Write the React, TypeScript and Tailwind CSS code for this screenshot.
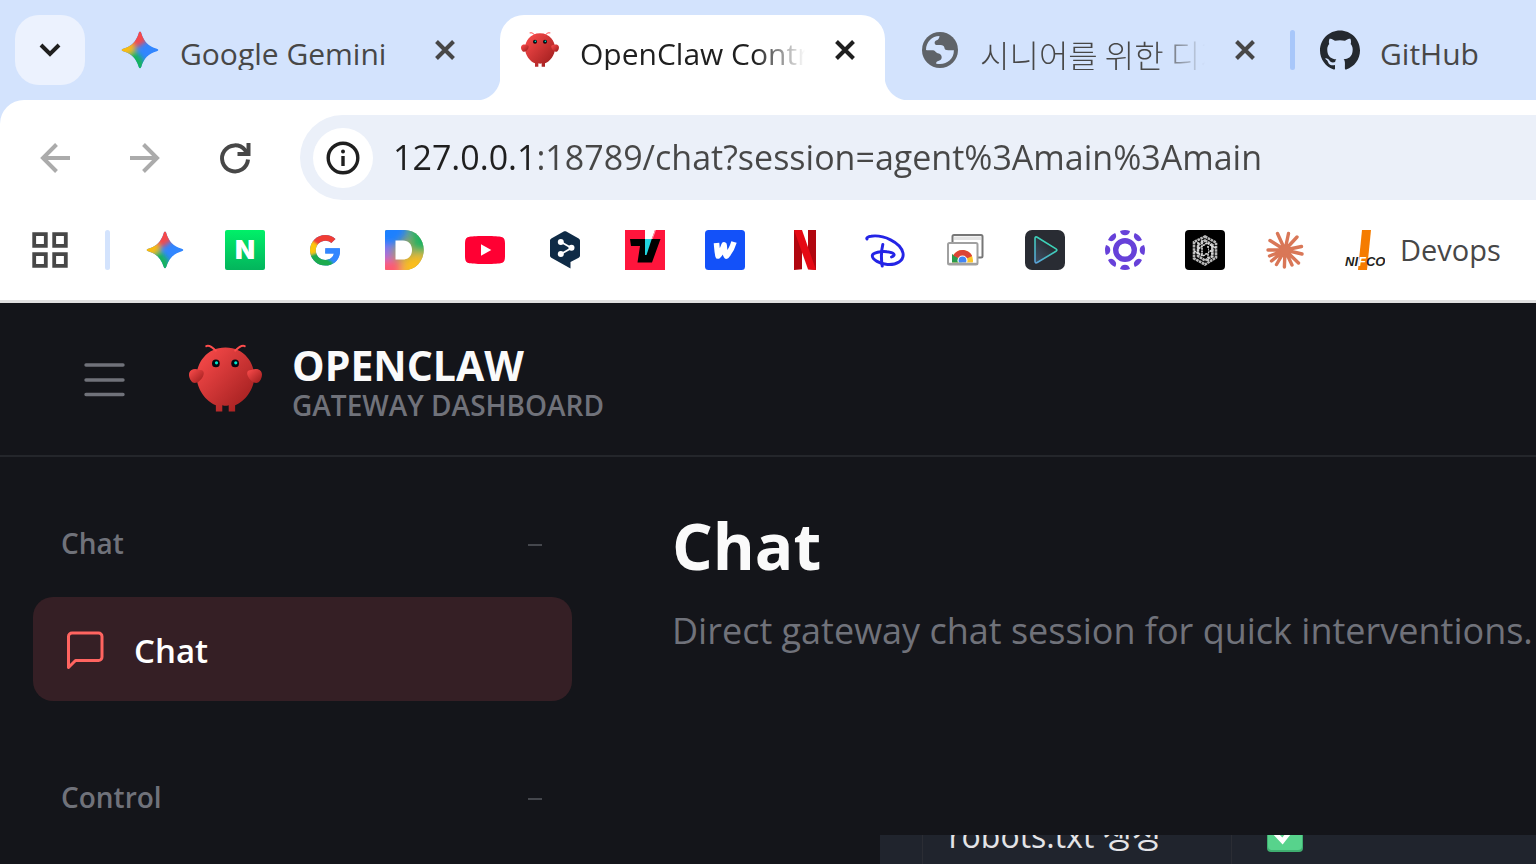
import type { ReactNode } from 'react';
import { SiGithub } from 'react-icons/si';

function Gemini({ id }: { id: string }) {
  return (
    <svg viewBox="0 0 40 40" className="size-10 shrink-0" aria-hidden="true">
      <defs>
        <clipPath id={`${id}-c`}>
          <path d="M20 1.8c.7 0 1 .5 1.3 1.4C23.800 11.500 28.500 16.200 36.800 18.700c.9.3 1.400.6 1.400 1.300s-.5 1-1.400 1.300C28.500 23.800 23.800 28.500 21.300 36.800c-.3.9-.6 1.400-1.300 1.400s-1-.5-1.300-1.400C16.200 28.500 11.500 23.800 3.200 21.300 2.300 21 1.800 20.700 1.800 20s.5-1 1.400-1.300C11.500 16.200 16.200 11.500 18.700 3.200 19 2.300 19.300 1.800 20 1.800z" />
        </clipPath>
        <filter id={`${id}-b`} x="-50%" y="-50%" width="200%" height="200%">
          <feGaussianBlur stdDeviation="2.6" />
        </filter>
      </defs>
      <g clipPath={`url(#${id}-c)`}>
        <rect width="40" height="40" fill="#3186ff" />
        <g filter={`url(#${id}-b)`}>
          <path d="M8 -4h22v12l-12 9-10-3z" fill="#f5484b" />
          <path d="M-4 10l13-1 7 10-7 7-13 2z" fill="#fbbc0b" />
          <path d="M8 24l7-4 9 11 2 14H8z" fill="#15b45c" />
        </g>
      </g>
    </svg>
  );
}

function Claw({ id, className }: { id: string; className: string }) {
  return (
    <svg viewBox="0 0 120 120" className={className} aria-hidden="true">
      <defs>
        <linearGradient id={id} x1="0%" y1="0%" x2="100%" y2="100%">
          <stop offset="0%" stopColor="#ff4d4d" />
          <stop offset="100%" stopColor="#991b1b" />
        </linearGradient>
      </defs>
      <g fill={`url(#${id})`}>
        <path d="M60 10C30 10 15 35 15 55c0 20 15 40 30 45v10h10v-10s5 2 10 0v10h10v-10c15-5 30-25 30-45 0-20-15-45-45-45z" />
      </g>
      <path d="M20 45C5 40 0 50 5 60s15 5 20-5c3-7 0-10-5-10z" fill={`url(#${id})`} />
      <path d="M100 45c15-5 20 5 15 15s-15 5-20-5c-3-7 0-10 5-10z" fill={`url(#${id})`} />
      <path d="M45 15Q35 5 30 8M75 15Q85 5 90 8" fill="none" stroke="#ff4d4d" strokeWidth="3" strokeLinecap="round" />
      <circle cx="45" cy="35" r="6" fill="#050810" />
      <circle cx="75" cy="35" r="6" fill="#050810" />
      <circle cx="46" cy="34" r="2.5" fill="#00e5cc" />
      <circle cx="76" cy="34" r="2.5" fill="#00e5cc" />
    </svg>
  );
}

function Globe() {
  return (
    <svg viewBox="0 0 40 40" className="size-10 shrink-0" aria-hidden="true">
      <circle cx="20" cy="20" r="18" fill="#5f6368" />
      <path
        d="M6 20C6 12 12 6 19.500 6c-.4 2.600-1 3.600-2.800 4.200-1.700.6-2.200 1.600-2 3 .2 1.200.8 1.800 2.300 1.800 2.500 0 5-.5 6.500 1 1.500 1.500.5 3.500 3 4 2.500.5 4.500.3 7.400.2C34 28.500 27.500 34 20 34c-1.500 0-3-.2-4-.6.2-2.200 2.400-2.400 4.400-3.400 1.600-.8 1.600-3.400.6-5-1.200-1.800-3-1.200-4.600-2.400C15 21.500 14.800 20.400 13 20.200 10.500 20 8 20.400 6 20z"
        fill="#d3e3fd"
      />
    </svg>
  );
}

function CloseIcon() {
  return (
    <svg viewBox="0 0 40 40" className="size-10" fill="none" stroke="currentColor" strokeWidth="4" aria-hidden="true">
      <path d="M11.500 11.500l17 17M28.500 11.500l-17 17" />
    </svg>
  );
}

type TabProps = { title: string; icon: ReactNode; active?: boolean; textClass: string };

function Tab({ title, icon, active = false, textClass }: TabProps) {
  const base = 'relative flex w-[385px] shrink-0 items-center gap-5 px-5 pb-[15px]';
  const look = active
    ? ' rounded-t-3xl bg-white text-[#1f1f1f] before:absolute before:bottom-0 before:-left-6 before:size-6 before:bg-[radial-gradient(circle_at_0_0,transparent_24px,white_25px)] after:absolute after:-right-6 after:bottom-0 after:size-6 after:bg-[radial-gradient(circle_at_100%_0,transparent_24px,white_25px)]'
    : ' text-[#474747]';
  return (
    <div className={base + look} role="tab" aria-selected={active}>
      {icon}
      <span className={`h-10 min-w-0 flex-1 overflow-hidden leading-12 whitespace-nowrap ${textClass}`}>{title}</span>
      <button type="button" aria-label={`Close ${title}`}>
        <CloseIcon />
      </button>
    </div>
  );
}

const fade = 'mask-[linear-gradient(90deg,black_175px,transparent_225px)]';

const ico = 'size-10 shrink-0';

const bookmarks: { name: string; icon: ReactNode }[] = [
  { name: 'Gemini', icon: <Gemini id="gem-b" /> },
  {
    name: 'Naver',
    icon: (
      <span className="flex size-10 items-center justify-center rounded-xs bg-linear-to-b from-[#00f068] to-[#03b45c] font-[Inter] text-[26px] leading-none font-black text-white">
        N
      </span>
    ),
  },
  {
    name: 'Google',
    icon: (
      <svg viewBox="0 0 40 40" className={ico} aria-hidden="true">
        <defs>
          <clipPath id="goo-c">
            <path
              transform="translate(5 4.600) scale(.0615)"
              d="M488 261.800C488 403.300 391.100 504 248 504 110.800 504 0 393.200 0 256S110.800 8 248 8c66.800 0 123 24.500 166.300 64.900l-67.500 64.900C258.500 52.600 94.300 116.600 94.300 256c0 86.500 69.100 156.600 153.700 156.600 98.200 0 135-70.400 140.800-106.900H248v-85.300h236.100c2.300 12.700 3.900 24.900 3.900 41.400z"
            />
          </clipPath>
          <filter id="goo-b" x="-20%" y="-20%" width="140%" height="140%">
            <feGaussianBlur stdDeviation="1.300" />
          </filter>
        </defs>
        <g clipPath="url(#goo-c)">
          <rect width="40" height="40" fill="#4285f4" />
          <g filter="url(#goo-b)">
            <path d="M20 20L4 10V0h36v16H20z" fill="#f03e35" />
            <path d="M20 20L6 10H0v18h6z" fill="#fcc60a" />
            <path d="M20 20L2 26v14h26v-8z" fill="#1cab4e" />
            <path d="M19 17h22v14l-11 3-11-8z" fill="#3086ff" />
          </g>
        </g>
      </svg>
    ),
  },
  {
    name: 'Daum',
    icon: (
      <svg viewBox="0 0 40 40" className={ico} aria-hidden="true">
        <defs>
          <clipPath id="daum-c">
            <path d="M1.500 0H20a18.700 20 0 0 1 0 40H1.500A1.500 1.500 0 0 1 0 38.500v-37A1.500 1.500 0 0 1 1.500 0z" />
          </clipPath>
          <filter id="daum-b" x="-20%" y="-20%" width="140%" height="140%">
            <feGaussianBlur stdDeviation="4" />
          </filter>
        </defs>
        <g clipPath="url(#daum-c)">
          <rect width="40" height="40" fill="#a0a45e" />
          <g filter="url(#daum-b)">
            <path d="M-10 -10h32v16L8 18h-18z" fill="#1a80ff" />
            <path d="M24 -10h26v34H30z" fill="#1fb364" />
            <path d="M-10 17H8v14h-18z" fill="#a070e0" />
            <path d="M-10 30h26v20h-26z" fill="#ff5a70" />
            <path d="M18 28l22-6v28H16z" fill="#fbbd1a" />
          </g>
        </g>
        <path d="M10.500 10.500v19H18c5.500 0 9-4 9-9.500s-3.500-9.500-9-9.500z" fill="#fff" />
      </svg>
    ),
  },
  {
    name: 'YouTube',
    icon: (
      <svg viewBox="0 0 40 40" className={ico} aria-hidden="true">
        <path d="M4.500 6.800c6-1 25-1 31 0 3 .4 4.200 2.200 4.400 5 .3 5 .3 11.400 0 16.400-.2 2.800-1.400 4.600-4.400 5-6 1-25 1-31 0-3-.4-4.200-2.200-4.400-5-.3-5-.3-11.400 0-16.400.2-2.800 1.400-4.600 4.400-5z" fill="#ff0033" />
        <path d="M16 14.200v11.600L26.300 20z" fill="#fff" />
      </svg>
    ),
  },
  {
    name: 'DeepL',
    icon: (
      <svg viewBox="0 0 40 40" className={ico} aria-hidden="true">
        <path d="M18.700 1.500c.8-.5 1.800-.5 2.600 0l12.400 7c.8.5 1.300 1.300 1.300 2.300v14.600c0 1-.5 1.800-1.300 2.300L25.500 32v6.500L6.300 27.700c-.8-.5-1.300-1.300-1.300-2.300V10.800c0-1 .5-1.800 1.300-2.300z" fill="#0f2b46" />
        <path d="M16 12l10.500 6L16 24" fill="none" stroke="#fff" strokeWidth="1.800" />
        <circle cx="15.800" cy="12" r="3" fill="#fff" />
        <circle cx="26.500" cy="17.800" r="3" fill="#fff" />
        <circle cx="15.800" cy="24" r="3" fill="#fff" />
      </svg>
    ),
  },
  {
    name: 'TVING',
    icon: (
      <svg viewBox="0 0 40 40" className={ico} aria-hidden="true">
        <path d="M0 0h40v40H0z" fill="#ff153c" />
        <path d="M20 0h10l-4 11h-6z" fill="#fff" />
        <path d="M26 11l4-11h1l-4 11z" fill="#ff9aab" />
        <path d="M5 9h30.500L27 32.500H12.500L15 16H6z" fill="#000" />
        <path d="M20 9h6.700L21.500 25H20z" fill="#20d5df" />
      </svg>
    ),
  },
  {
    name: 'Wavve',
    icon: (
      <svg viewBox="0 0 40 40" className={ico} aria-hidden="true">
        <rect width="40" height="40" rx="3.500" fill="#1351f9" />
        <path d="M11.500 13c.5 5 .6 9 1.600 13 2.700-2.500 4.500-6.500 6-11 0 4 .8 8 2.300 11 3.700-4 6-8.500 7.600-14" fill="none" stroke="#fff" strokeWidth="5.600" strokeLinejoin="round" />
      </svg>
    ),
  },
  {
    name: 'Netflix',
    icon: (
      <svg viewBox="0 0 40 40" className={ico} aria-hidden="true">
        <path d="M9 0h8v39.200L9 40zM23 0h8v40l-8-.8z" fill="#b1060f" />
        <path d="M9 0h8l14 40-8-.8z" fill="#e50914" />
      </svg>
    ),
  },
  {
    name: 'Disney+',
    icon: (
      <svg viewBox="0 0 40 40" className={ico} aria-hidden="true" fill="none" stroke="#2424e6" strokeLinecap="round" strokeLinejoin="round">
        <path d="M2 9C1 8 3 6.500 6 6.200 18 4.500 35.500 12 38 23 39.500 31 31 35 22.500 34.500 14.500 34 7.500 29.500 7.300 26 7 22.500 17 21 22 21.700c7 .7 9.500 3.300 4.500 5.300" strokeWidth="2.900" />
        <path d="M17.800 14.500c-1.500 6-1.600 15-.6 21.500" strokeWidth="3" />
      </svg>
    ),
  },
  {
    name: 'Chrome Web Store',
    icon: (
      <svg viewBox="0 0 40 40" className={ico} aria-hidden="true">
        <defs>
          <clipPath id="cws-c">
            <path d="M5.500 13.500h24v19h-24z" />
          </clipPath>
        </defs>
        <rect x="7.500" y="5" width="30" height="22.500" rx="1.500" fill="#fff" stroke="#777" strokeWidth="2" />
        <path d="M9 6.500h27v3.500H9z" fill="#e4e4e4" />
        <rect x="3" y="13" width="29.500" height="21.500" rx="1.500" fill="#fff" stroke="#a0a0a0" strokeWidth="2" />
        <g clipPath="url(#cws-c)">
          <circle cx="17.500" cy="30.500" r="10.500" fill="#fcc629" />
          <path d="M17.500 30.500L7 24v14h8z" fill="#2a9a4b" />
          <path d="M17.500 30.500L8.200 25.500C10 22 13.500 20 17.500 20s8 2.300 9.700 6z" fill="#db4437" />
          <circle cx="17.500" cy="30.500" r="5" fill="#fff" />
          <circle cx="17.500" cy="30.500" r="3.900" fill="#4285f4" />
        </g>
        <path d="M3 33.800h29.500" stroke="#a0a0a0" strokeWidth="2" />
      </svg>
    ),
  },
  {
    name: 'Player',
    icon: (
      <svg viewBox="0 0 40 40" className={ico} aria-hidden="true">
        <defs>
          <linearGradient id="pl-s" x1="0" y1="1" x2=".6" y2="0">
            <stop offset="0" stopColor="#5aa0d8" />
            <stop offset="1" stopColor="#35dfb0" />
          </linearGradient>
          <linearGradient id="pl-f" x1="0" y1="1" x2="1" y2="0">
            <stop offset="0" stopColor="#3f5065" />
            <stop offset=".7" stopColor="#292c33" />
          </linearGradient>
        </defs>
        <rect width="40" height="40" rx="7" fill="#292c33" />
        <path d="M10 8.500c0-1.500 1-2 2.200-1.300l18.800 11.600c1.200.8 1.200 1.800 0 2.500L12.200 32.500c-1.200.7-2.200.2-2.200-1.200z" fill="url(#pl-f)" stroke="url(#pl-s)" strokeWidth="1.600" />
      </svg>
    ),
  },
  {
    name: 'Orbit',
    icon: (
      <svg viewBox="0 0 40 40" className={ico} aria-hidden="true">
        <circle cx="20" cy="20" r="9.300" fill="none" stroke="#6741d9" strokeWidth="5.400" />
        <g fill="#6741d9">
          {[0, 45, 90, 135, 180, 225, 270, 315].map((a) => (
            <path key={a} transform={`rotate(${a} 20 20)`} d="M15 1Q20-1 25 1 24 5.300 20 5.300T15 1z" />
          ))}
        </g>
      </svg>
    ),
  },
  {
    name: 'Knot',
    icon: (
      <svg viewBox="0 0 40 40" className={ico} aria-hidden="true">
        <rect width="40" height="40" rx="4" fill="#000" />
        <g fill="none" stroke="#b8b8b8" strokeWidth="2.600" strokeDasharray="2.600 .6">
          <path d="M20 6.500l11 6v15l-11 7-11-6V12z" />
          <path d="M20 10.500l7.500 4.500v11L20 30.500l-7-4.500V15z" />
        </g>
        <g fill="none" stroke="#dcdcdc" strokeWidth="1.600">
          <path d="M9 21l9 5 9-6M13 12v12M17 10v16M31 18l-9-5-9 6M27 15v13M23 16v15" strokeDasharray="2 .6" />
        </g>
        <path d="M18 16l5 2v5l-5-1z" fill="#000" />
      </svg>
    ),
  },
  {
    name: 'Claude',
    icon: (
      <svg viewBox="0 0 40 40" className={ico} aria-hidden="true">
        <g stroke="#d97757" strokeWidth="3.400" strokeLinecap="round">
          <path d="M20 20L12.500 3.500M20 20L23.500 3.500M20 20L32 7M20 20L36.500 16.500M20 20L37 24M20 20L33.500 33M20 20L27 35M20 20L19.400 37M20 20L11.500 34.500M20 20L6.500 31M20 20L4.500 26M20 20L3 20M20 20L5 10.500" />
        </g>
        <circle cx="20" cy="20" r="5" fill="#d97757" />
      </svg>
    ),
  },
];

function SectionHeader({ label }: { label: string }) {
  return (
    <button type="button" className="flex w-full items-center justify-between pr-[30px] pl-7 text-left text-[28px] leading-10 font-semibold text-[#70727a]">
      {label}
      <span className="mt-1 h-[2px] w-[14px] bg-[#45474d]" aria-hidden="true" />
    </button>
  );
}

export default function App() {
  return (
    <div className="flex h-screen flex-col overflow-hidden bg-[#14151a] font-['Open_Sans','Noto_Sans_CJK_KR',sans-serif]">
      <div className="shrink-0 bg-[#d3e3fd]">
        <div className="flex h-[100px] gap-[15px] pt-[15px] pl-[15px]" role="tablist">
          <button type="button" aria-label="Search tabs" className="flex size-[70px] shrink-0 items-center justify-center rounded-3xl bg-[#ecf2fe]">
            <svg viewBox="0 0 40 40" className="size-10" fill="none" stroke="#1f1f1f" strokeWidth="4" aria-hidden="true">
              <path d="M11 15l9 9 9-9" />
            </svg>
          </button>
          <Tab title="Google Gemini" icon={<Gemini id="gem-a" />} textClass="text-[30px]" />
          <Tab title="OpenClaw Control" icon={<Claw id="claw-tab" className="size-10 shrink-0" />} active textClass={`text-[30px] ${fade}`} />
          <Tab title="시니어를 위한 디지털" icon={<Globe />} textClass={`text-[32px] font-['Noto_Sans_CJK_KR',sans-serif] font-light ${fade}`} />
          <div className="relative flex shrink-0 items-center gap-5 pb-[15px] pl-[20px] text-[#474747] before:absolute before:top-[15px] before:-left-[10px] before:h-10 before:w-[5px] before:rounded-full before:bg-[#a8c7fa]" role="tab" aria-selected={false}>
            <SiGithub className="size-10 shrink-0 text-[#24292f]" />
            <span className="h-10 text-[30px] leading-12 whitespace-nowrap">GitHub</span>
          </div>
        </div>

        <div className="rounded-tl-3xl border-b-[3px] border-[#e0e0e0] bg-white">
          <div className="flex h-[100px] items-center gap-[50px] pt-[15px] pl-[35px]">
            <button type="button" aria-label="Back" className="shrink-0 text-[#ababab]">
              <svg viewBox="0 0 40 40" className="size-10" fill="none" stroke="currentColor" strokeWidth="4" aria-hidden="true">
                <path d="M35 20H8M21.500 6.500L8 20l13.500 13.500" />
              </svg>
            </button>
            <button type="button" aria-label="Forward" className="shrink-0 text-[#ababab]">
              <svg viewBox="0 0 40 40" className="size-10" fill="none" stroke="currentColor" strokeWidth="4" aria-hidden="true">
                <path d="M5 20h27M18.500 6.500L32 20 18.500 33.500" />
              </svg>
            </button>
            <button type="button" aria-label="Reload" className="shrink-0 text-[#474747]">
              <svg viewBox="0 0 40 40" className="size-10" fill="none" stroke="currentColor" strokeWidth="4" aria-hidden="true">
                <path d="M33 21.500A13 13 0 1 1 30 12l2.500 3.500" />
                <path d="M33.500 5v11H22.500" />
                <path d="M27 16l6-6v6z" fill="currentColor" stroke="none" />
              </svg>
            </button>
            <label className="-ml-[5px] flex h-[85px] min-w-0 flex-1 items-center gap-5 rounded-l-full bg-[#ebf0f9] pl-[13px]">
              <span className="flex size-[60px] shrink-0 items-center justify-center rounded-full bg-white">
                <svg viewBox="0 0 40 40" className="size-10" aria-hidden="true">
                  <circle cx="20" cy="20" r="14.800" fill="none" stroke="#1f1f1f" strokeWidth="3.400" />
                  <path d="M20 18v10" stroke="#1f1f1f" strokeWidth="3.400" />
                  <circle cx="20" cy="13.500" r="2" fill="#1f1f1f" />
                </svg>
              </span>
              <input
                type="text"
                aria-label="Address"
                defaultValue="127.0.0.1:18789/chat?session=agent%3Amain%3Amain"
                className="min-w-0 flex-1 bg-[linear-gradient(90deg,#1f1f1f_142px,#474747_142px)] bg-clip-text text-[34px] text-transparent outline-none"
              />
            </label>
          </div>

          <div className="flex h-[100px] items-center gap-[35px] pl-[30px]">
            <button type="button" aria-label="Apps" className="shrink-0">
              <svg viewBox="0 0 40 40" className="size-10" fill="none" stroke="#474747" strokeWidth="3.800" aria-hidden="true">
                <path d="M4.200 4.200h11.600v11.600H4.200zM24.200 4.200h11.600v11.600H24.200zM4.200 24.200h11.600v11.600H4.200zM24.200 24.200h11.600v11.600H24.200z" />
              </svg>
            </button>
            <span className="h-10 w-[5px] shrink-0 rounded-full bg-[#d3e3fd]" />
            <div className="flex items-center gap-10">
              {bookmarks.map((b) => (
                <a key={b.name} href="#" aria-label={b.name} className="shrink-0">
                  {b.icon}
                </a>
              ))}
              <a href="#" className="flex shrink-0 items-center gap-[15px] text-[29px] leading-10 text-[#474747]">
                <svg viewBox="0 0 40 40" className={ico} role="img" aria-label="Nifco">
                  <path d="M17 0h9l-4 40h-9z" fill="#f57c00" />
                  <text x="0" y="36" fill="#231f20" className="font-['Liberation_Sans',sans-serif] text-[13px] font-bold italic">
                    NI<tspan fill="#fff">F</tspan>CO
                  </text>
                </svg>
                Devops
              </a>
            </div>
          </div>
        </div>
      </div>

      <header className="flex h-[154px] shrink-0 items-center border-b-2 border-[#24262b] pl-[84px]">
        <button type="button" aria-label="Toggle navigation" className="mr-[62px]">
          <svg viewBox="0 0 41 41" className="size-[41px]" stroke="#70727a" strokeWidth="3.400" strokeLinecap="round" aria-hidden="true">
            <path d="M2 6h37M2 21h37M2 35.500h37" />
          </svg>
        </button>
        <Claw id="claw-logo" className="mr-7 size-[77px]" />
        <div className="pt-3">
          <div className="text-[41px] leading-10 font-bold text-[#fafafa]">OPENCLAW</div>
          <div className="text-[28px] leading-10 font-semibold text-[#70727a]">GATEWAY DASHBOARD</div>
        </div>
      </header>

      <div className="flex min-h-0 flex-1">
        <nav className="w-[605px] shrink-0 overflow-hidden px-[33px] pt-[66px]">
          <SectionHeader label="Chat" />
          <a href="#" aria-current="page" className="mt-[34px] mb-[76px] flex h-[104px] items-center gap-[29px] rounded-[20px] bg-[#351f25] px-8 pt-1 text-[33px] font-semibold text-white">
            <svg viewBox="0 0 40 40" className="size-10" fill="none" stroke="#ff6460" strokeWidth="3" strokeLinejoin="round" aria-hidden="true">
              <path d="M37 26a3.500 3.500 0 0 1-3.500 3.500H10.500L3.500 36.500V5.500A3.500 3.500 0 0 1 7 2h26.500A3.500 3.500 0 0 1 37 5.500z" />
            </svg>
            Chat
          </a>
          <SectionHeader label="Control" />
        </nav>
        <main className="flex min-w-0 flex-1 flex-col overflow-hidden">
          <div className="pt-10 pl-[67px]">
            <h1 className="text-[64px] leading-[98px] font-bold text-[#fafafa]">Chat</h1>
            <p className="text-[36px] leading-[72px] whitespace-nowrap text-[#70727a]">Direct gateway chat session for quick interventions.</p>
          </div>
          <div className="mt-auto ml-[275px] flex h-[29px] flex-col justify-end overflow-hidden bg-[#20242d]">
            <table className="w-full table-fixed border-collapse text-[32px] leading-12 text-[#e4e4e7]">
              <tbody>
                <tr>
                  <td className="w-[42px]" />
                  <td className="w-[309px] border-x border-[#2b2d34] pb-1 pl-[26px] whitespace-nowrap">robots.txt 생성</td>
                  <td className="pb-2 pl-[35px]">
                    <svg viewBox="0 0 36 36" className="size-9" role="img" aria-label="Done">
                      <rect width="36" height="36" rx="4" fill="#3fae70" />
                      <rect x="1" width="34" height="34" rx="4" fill="#57d38c" />
                      <path d="M7 16l8.500 9L29 8" fill="none" stroke="#fff" strokeWidth="4.500" />
                    </svg>
                  </td>
                </tr>
              </tbody>
            </table>
          </div>
        </main>
      </div>
    </div>
  );
}
